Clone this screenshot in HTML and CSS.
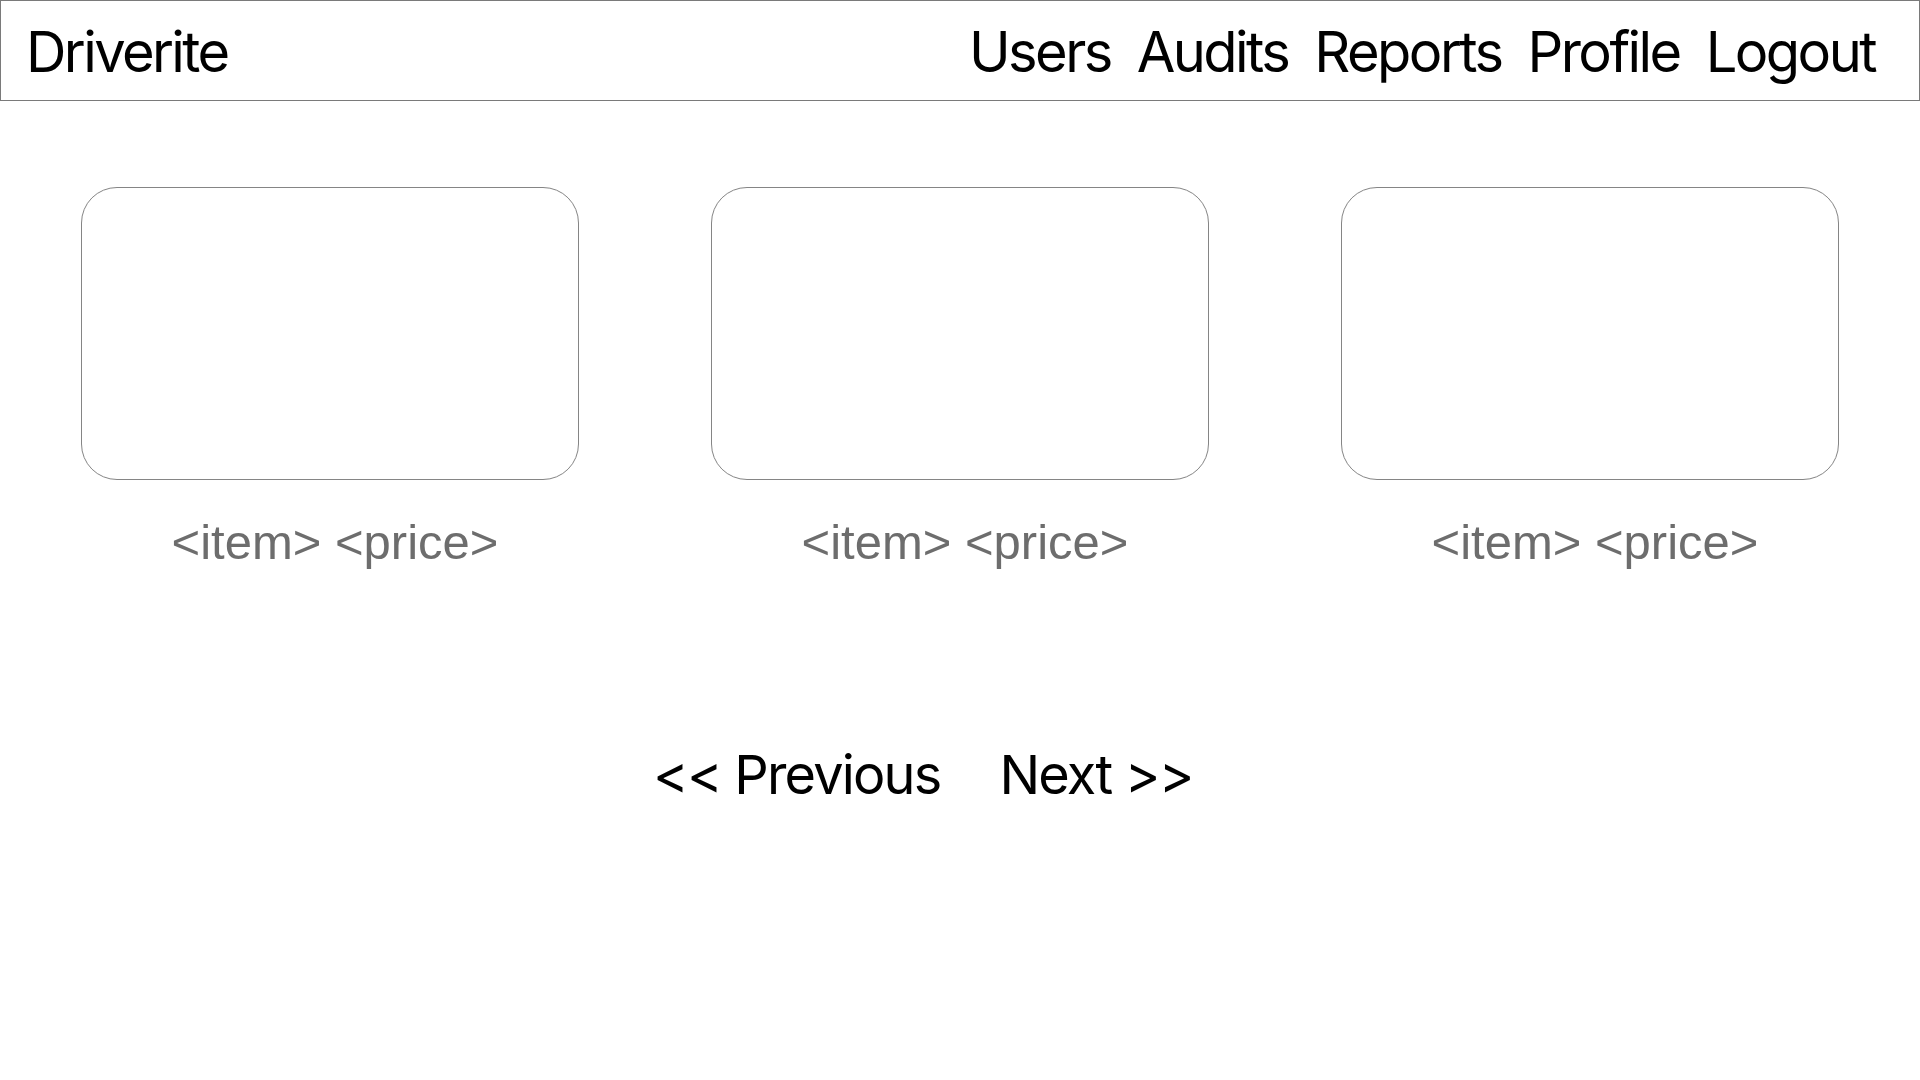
FILE: index.html
```html
<!DOCTYPE html>
<html lang="en">
<head>
<meta charset="utf-8">
<title>Driverite</title>
<link rel="stylesheet" href="styles.css">
</head>
<body>
<header class="topbar">
  <div class="brand">Driverite</div>
  <nav class="nav">
    <a class="nav-link" href="#">Users</a>
    <a class="nav-link" href="#">Audits</a>
    <a class="nav-link" href="#">Reports</a>
    <a class="nav-link" href="#">Profile</a>
    <a class="nav-link" href="#">Logout</a>
  </nav>
</header>
<main class="content">
  <section class="cards">
    <div class="card">
      <div class="card-image"></div>
      <div class="card-label">&lt;item&gt; &lt;price&gt;</div>
    </div>
    <div class="card">
      <div class="card-image"></div>
      <div class="card-label">&lt;item&gt; &lt;price&gt;</div>
    </div>
    <div class="card">
      <div class="card-image"></div>
      <div class="card-label">&lt;item&gt; &lt;price&gt;</div>
    </div>
  </section>
  <div class="pager">
    <a class="pager-link" href="#">&lt;&lt; Previous</a>
    <a class="pager-link" href="#">Next &gt;&gt;</a>
  </div>
</main>
</body>
</html>
```

FILE: styles.css
```css
html, body {
  margin: 0;
  padding: 0;
  background: #ffffff;
}

body {
  font-family: Inter, "Noto Sans", sans-serif;
  color: #000000;
  width: 1920px;
  height: 1080px;
  overflow: hidden;
}

.topbar {
  box-sizing: border-box;
  height: 101px;
  border: 1px solid #7a7a7a;
  display: flex;
  align-items: center;
  justify-content: space-between;
  padding: 2px 44px 0 25px;
}

.brand {
  font-size: 56px;
  letter-spacing: -2.6px;
  line-height: 1;
}

.nav {
  display: flex;
  gap: 26px;
}

.nav-link {
  font-size: 56px;
  letter-spacing: -2.55px;
  line-height: 1;
  color: #000000;
  text-decoration: none;
}

.content {
  display: flex;
  flex-direction: column;
}

.cards {
  display: grid;
  grid-template-columns: repeat(3, 498px);
  column-gap: 132px;
  padding: 86px 0 0 81px;
}

.card {
  display: flex;
  flex-direction: column;
  align-items: center;
}

.card-image {
  box-sizing: border-box;
  width: 498px;
  height: 293px;
  border: 1px solid #858585;
  border-radius: 36px;
}

.card-label {
  margin-top: 34px;
  padding-left: 10px;
  font-family: "Liberation Sans", Arial, sans-serif;
  font-size: 49px;
  line-height: 56px;
  color: #6d6d6d;
}

.pager {
  display: flex;
  gap: 59px;
  padding: 178px 0 0 653px;
}

.pager-link {
  font-size: 54px;
  letter-spacing: -1.8px;
  line-height: 1;
  color: #000000;
  text-decoration: none;
}
```
